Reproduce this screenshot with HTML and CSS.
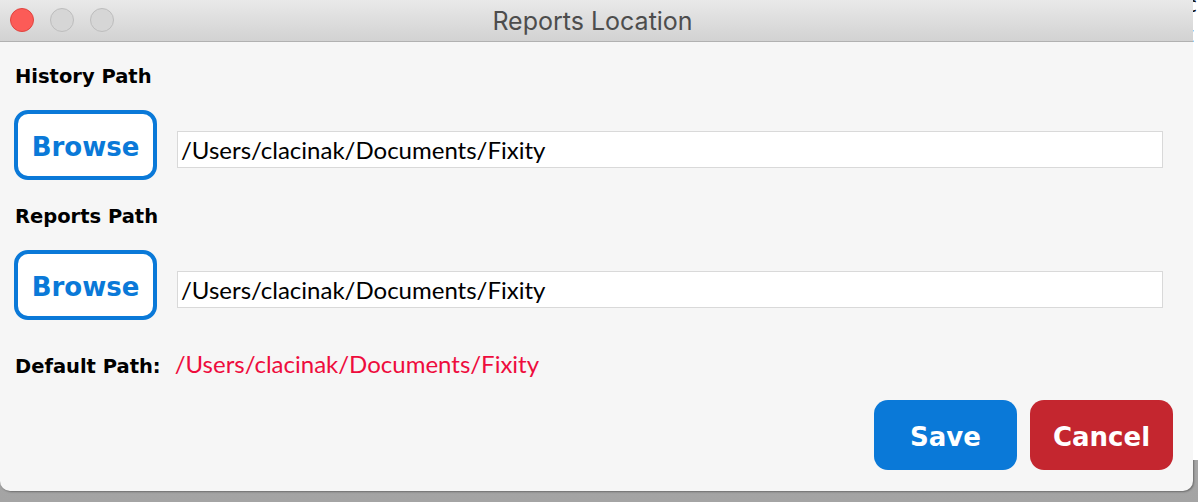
FILE: index.html
```html
<!DOCTYPE html>
<html lang="en">
<head>
    <meta charset="UTF-8">
    <title>Reports Location</title>
    <link rel="stylesheet" href="styles.css">
</head>
<body>
    <div class="desktop">
        <div class="window">
            <div class="titlebar">
                <div class="lights">
                    <span class="light close"></span>
                    <span class="light"></span>
                    <span class="light"></span>
                </div>
                <div class="title">Reports Location</div>
            </div>
            <div class="content">
                <div class="label">History Path</div>
                <div class="path-row">
                    <button class="browse">Browse</button>
                    <input class="path-input" type="text" value="/Users/clacinak/Documents/Fixity">
                </div>

                <div class="label second">Reports Path</div>
                <div class="path-row">
                    <button class="browse">Browse</button>
                    <input class="path-input" type="text" value="/Users/clacinak/Documents/Fixity">
                </div>

                <div class="default-row">
                    <span class="default-label">Default Path:</span>
                    <span class="default-path">/Users/clacinak/Documents/Fixity</span>
                </div>

                <div class="actions">
                    <button class="action save">Save</button>
                    <button class="action cancel">Cancel</button>
                </div>
            </div>
        </div>
        <div class="side">
            <span>c</span>
            <span>t</span>
        </div>
    </div>
</body>
</html>
```

FILE: styles.css
```css
body { margin: 0; background: linear-gradient(#b4b4b4, #a4a4a4); overflow: hidden; }
.desktop { display: flex; width: 1198px; height: 502px; }

.window { width: 1193px; height: 491px; background: #f6f6f6; border-radius: 0 0 10px 10px; box-shadow: 1px 1px 2px rgba(0,0,0,0.35); display: flex; flex-direction: column; }

.titlebar { height: 41px; background: linear-gradient(#e9e9e9, #d2d2d2); border-bottom: 1px solid #b1b1b1; position: relative; display: flex; align-items: center; justify-content: center; }
.lights { position: absolute; left: 10px; top: 8px; display: flex; gap: 16px; }
.light { width: 22px; height: 22px; border-radius: 50%; background: #d6d6d6; border: 1px solid #bdbdbd; }
.light.close { background: #fc5b57; border-color: #e0443f; }
.title { font-family: Inter, "Open Sans", sans-serif; font-size: 25px; color: #4d4d4d; margin-left: -8px; margin-top: 1px; }

.content { padding: 23px 30px 0 14px; }
.label { font-family: "DejaVu Sans", Verdana, sans-serif; font-weight: bold; font-size: 19.5px; line-height: 24px; color: #000; margin-left: 1px; }
.label.second { margin-top: 25px; }

.path-row { display: flex; align-items: flex-start; margin-top: 21px; }
.browse { width: 143px; height: 70px; box-sizing: border-box; border: 4px solid #0a79d8; border-radius: 14px; background: #fff; color: #0a79d8; font-family: "DejaVu Sans", Verdana, sans-serif; font-weight: bold; font-size: 26px; padding: 3px 0 0; }
.path-input { margin: 21px 0 0 20px; flex: 1; height: 37px; box-sizing: border-box; border: 1px solid #d9d9d9; background: #fff; font-family: Lato, sans-serif; font-size: 24px; color: #000; padding: 0 0 0 3px; outline: none; }

.default-row { display: flex; align-items: baseline; margin-top: 29px; margin-left: 1px; }
.default-label { font-family: "DejaVu Sans", Verdana, sans-serif; font-weight: bold; font-size: 19.5px; color: #000; }
.default-path { font-family: Lato, sans-serif; font-size: 24px; color: #ee0c3d; margin-left: 14px; }

.actions { display: flex; justify-content: flex-end; gap: 13px; margin-top: 22px; margin-right: -10px; }
.action { width: 143px; height: 70px; border: none; border-radius: 14px; color: #fff; font-family: "DejaVu Sans", Verdana, sans-serif; font-weight: bold; font-size: 26px; padding: 3px 0 0; }
.save { background: #0a79d8; }
.cancel { background: #c4262f; }

.side { width: 5px; height: 470px; background: #fff; overflow: hidden; display: flex; flex-direction: column; font-family: "DejaVu Sans", sans-serif; font-size: 22px; line-height: 30px; margin-top: -10px; }
.side span { margin-left: -8px; }
```
